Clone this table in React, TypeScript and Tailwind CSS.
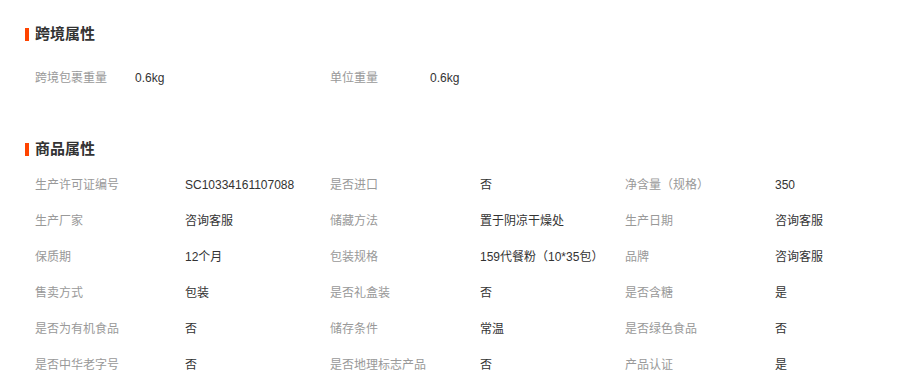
const font = { fontFamily: '"Liberation Sans", "Noto Sans CJK SC", sans-serif' };

const crossBorder: [string, string][] = [
  ['跨境包裹重量', '0.6kg'],
  ['单位重量', '0.6kg'],
];

const product: [string, string][] = [
  ['生产许可证编号', 'SC10334161107088'],
  ['是否进口', '否'],
  ['净含量（规格）', '350'],
  ['生产厂家', '咨询客服'],
  ['储藏方法', '置于阴凉干燥处'],
  ['生产日期', '咨询客服'],
  ['保质期', '12个月'],
  ['包装规格', '159代餐粉（10*35包）'],
  ['品牌', '咨询客服'],
  ['售卖方式', '包装'],
  ['是否礼盒装', '否'],
  ['是否含糖', '是'],
  ['是否为有机食品', '否'],
  ['储存条件', '常温'],
  ['是否绿色食品', '否'],
  ['是否中华老字号', '否'],
  ['是否地理标志产品', '否'],
  ['产品认证', '是'],
];

function Title({ children }: { children: React.ReactNode }) {
  return (
    <div className="flex items-center h-5 pl-[25px]">
      <span className="w-1 h-[13px] bg-[#ff4400] mr-[6px]"></span>
      <h3 className="text-[15px] font-bold text-[#333] leading-5">{children}</h3>
    </div>
  );
}

export default function App() {
  return (
    <div className="bg-white w-[903px] h-[392px] overflow-hidden pt-6" style={font}>
      <Title>跨境属性</Title>
      <div className="grid grid-cols-[295px_295px_295px] pl-[35px] mt-4">
        {crossBorder.map(([k, v]) => (
          <div key={k} className="flex items-center h-9 text-xs">
            <span className="w-[100px] text-[#999]">{k}</span>
            <span className="text-[#333]">{v}</span>
          </div>
        ))}
      </div>
      <div className="mt-[43px]">
        <Title>商品属性</Title>
      </div>
      <div className="grid grid-cols-[295px_295px_295px] pl-[35px] mt-2">
        {product.map(([k, v]) => (
          <div key={k} className="flex items-center h-9 text-xs">
            <span className="w-[150px] text-[#999]">{k}</span>
            <span className="text-[#333]">{v}</span>
          </div>
        ))}
      </div>
    </div>
  );
}
